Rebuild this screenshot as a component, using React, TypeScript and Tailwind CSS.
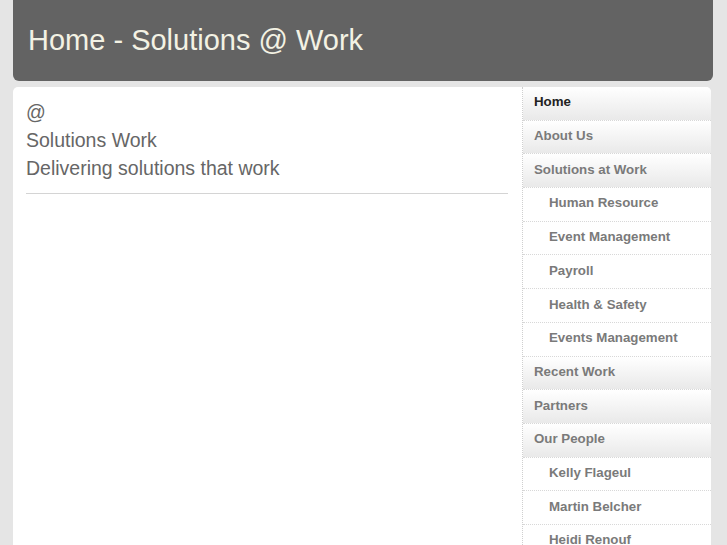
import React from "react";

const items: { label: string; sub?: boolean; active?: boolean }[] = [
  { label: "Home", active: true },
  { label: "About Us" },
  { label: "Solutions at Work" },
  { label: "Human Resource", sub: true },
  { label: "Event Management", sub: true },
  { label: "Payroll", sub: true },
  { label: "Health & Safety", sub: true },
  { label: "Events Management", sub: true },
  { label: "Recent Work" },
  { label: "Partners" },
  { label: "Our People" },
  { label: "Kelly Flageul", sub: true },
  { label: "Martin Belcher", sub: true },
  { label: "Heidi Renouf", sub: true },
];

export default function App() {
  return (
    <div
      className="w-[727px] h-[545px] overflow-hidden bg-[#e5e5e5] px-[13px] flex flex-col"
      style={{ fontFamily: '"Liberation Sans", Arial, sans-serif' }}
    >
      <header className="h-[81px] shrink-0 bg-[#636363] rounded-b-[6px] flex items-center pl-[15px] w-[700px]">
        <h1 className="text-[29px] text-[#f3f2e4] leading-none">Home - Solutions @ Work</h1>
      </header>
      <div className="mt-[6px] flex-1 w-[698px] bg-white rounded-t-[5px] flex">
        <main className="w-[509px] shrink-0 pl-[13px] pr-[14px] pt-[11px]">
          <div className="text-[19.5px] leading-[28px] text-[#666]">
            <p>@</p>
            <p>Solutions Work</p>
            <p>Delivering solutions that work</p>
          </div>
          <div className="mt-[11px] border-t border-[#d4d4d4]" />
        </main>
        <nav className="flex-1 border-l border-dotted border-[#cfcfcf] flex flex-col">
          {items.map((it, i) => (
            <div
              key={i}
              className={`h-[33.7px] shrink-0 flex items-center pb-[2px] border-b border-dotted border-[#d8d8d8] font-bold text-[13.3px] ${
                it.sub ? "pl-[26px] bg-white" : "pl-[11px] bg-gradient-to-b from-white to-[#e9e9e9]"
              } ${it.active ? "text-[#222] rounded-tr-[5px]" : "text-[#7a7a7a]"}`}
            >
              {it.label}
            </div>
          ))}
        </nav>
      </div>
    </div>
  );
}
